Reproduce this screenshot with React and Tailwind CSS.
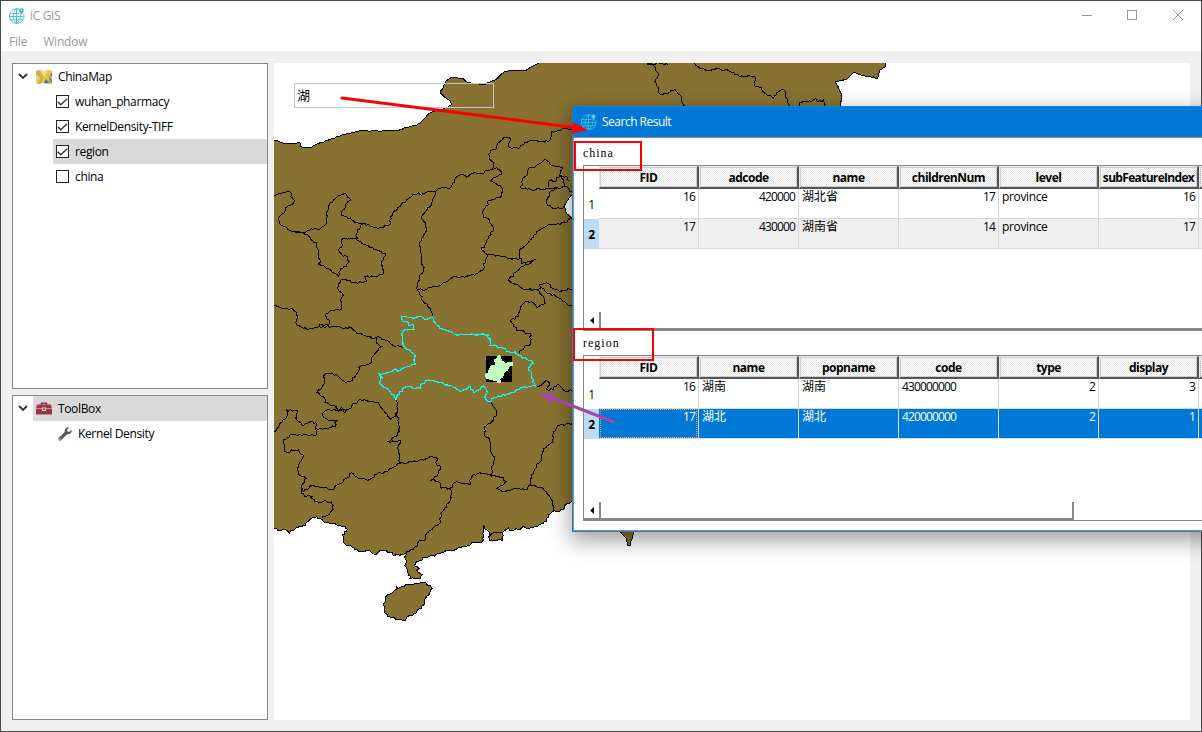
import React from "react";

const UI = "font-['Open_Sans','Noto_Sans_CJK_SC',sans-serif]";

// Every survey sheet stores its points in thirds of a pixel from its origin.
const SHEETS = { A: [270, 60], D: [270, 210], E: [270, 370], F: [270, 490], G: [565, 60] };

const read = (text) => {
  let origin = SHEETS.A;
  const points = [];
  text.trim().split(/\s+/).forEach((token) => {
    if (SHEETS[token]) {
      origin = SHEETS[token];
      return;
    }
    const [x, y] = token.split(",").map(Number);
    points.push([origin[0] + x / 3, origin[1] + y / 3]);
  });
  return points;
};

// Adds a small repeatable wobble between points so that borders look surveyed.
const trace = (text, amount = 2.4, closed = false) => {
  const pts = read(text);
  const out = [pts[0]];
  for (let i = 1; i < pts.length; i++) {
    const [ax, ay] = pts[i - 1];
    const [bx, by] = pts[i];
    const len = Math.hypot(bx - ax, by - ay);
    const n = Math.max(1, Math.min(12, Math.round(len / 2.2)));
    for (let k = 1; k < n; k++) {
      const x = ax + ((bx - ax) * k) / n;
      const y = ay + ((by - ay) * k) / n;
      const s = Math.sin(x * 12.9898 + y * 78.233) * 43758.5453;
      const w = (s - Math.floor(s) - 0.5) * amount;
      out.push([x - ((by - ay) / len) * w, y + ((bx - ax) / len) * w]);
    }
    out.push([bx, by]);
  }
  return "M" + out.map((p) => p[0].toFixed(1) + " " + p[1].toFixed(1)).join("L") + (closed ? "Z" : "");
};

const NORTH =
  "A 12,240 30,246 50,252 90,248 92,260 120,264 135,255 180,238 230,221 270,212 325,213 385,212 410,202 440,196 460,180 475,162 500,150 520,148 545,133 540,122 525,112 510,98 520,82 528,64 545,52 580,56 590,66 605,70 640,74 660,66 675,60 695,42 705,34 730,32 765,32 785,20 806,10";
const EAST = "G 962,8 962,20 945,30 938,54 900,48 865,38 845,58 810,66 820,80 828,100 830,120 825,138";
const SOUTH =
  "F 906,34 900,40 885,46 880,58 860,64 845,66 835,82 820,100 795,108 780,114 755,112 745,118 720,122 715,114 705,122 698,130 698,152 658,152 658,128 650,120 640,104 642,138 640,150 620,158 605,158 600,166 570,174 540,180 525,184 510,192 480,198 465,204 450,212 436,220 434,228 448,236 440,240 448,248 456,254 450,266 435,266 420,266 415,255 412,240 404,228 410,215 404,200 408,190 395,192 375,196 360,186 340,180 325,186 310,192 290,182 270,186 255,178 240,166 222,160 222,145 216,135 232,118 225,108 200,104 180,102 160,94 150,86 140,80 120,88 108,98 105,108 95,110 80,112 75,118 62,122 58,130 48,120 40,118 30,122 20,116 12,116";
const HAINAN =
  "F 345,322 360,312 372,302 380,290 385,296 395,290 420,285 440,282 460,278 480,286 487,296 480,306 470,318 462,335 455,355 440,366 428,378 412,380 400,392 385,388 365,382 345,370 343,350 345,335 345,322";
const TAIWAN = "F 1046,120 1060,135 1070,150 1072,166 1082,166 1084,150 1092,120";
const BAY = "A 915,400 905,405 890,425 882,440 888,455 890,462 D 898,18 905,24 915,28";

const BORDERS = [
  "A 12,408 25,402 40,398 60,396 66,402 62,410 74,422 70,430 55,436 45,452 35,462 28,470 24,480 28,490 50,502 70,515 100,516 130,508 155,502 170,490 168,475 172,455 178,435 190,418 205,408 225,400 232,410 242,420 230,430 218,450 214,465 230,470 250,482 270,490 285,490 300,498 320,504 350,498 362,488 362,470 375,452 390,440 410,420 430,402 445,398 455,406 470,396 490,394 498,400 488,420 480,440 465,455 D 455,20 470,55 460,80 448,100 455,145 460,180 448,205 440,235",
  "A 498,392 512,384 540,384 548,370 560,350 575,342 590,352 615,338 635,342 650,332 668,330 680,322 695,342 670,352 662,362 690,375 698,388 692,412 655,420 655,435 640,450 640,465 D 640,22 658,30 670,55 655,85 645,105 635,120 650,132",
  "A 668,330 672,312 658,295 662,272 680,265 682,250 700,234 718,232 718,262 745,266 760,254 785,240 810,246 840,240 845,215 870,212 890,205 906,208",
  "A 752,385 756,362 772,345 775,325 795,322 825,298 840,312 860,320 878,322 868,345 890,350 895,362",
  "A 752,385 785,390 830,385 865,384 885,378 900,395 908,396",
  "A 835,382 838,362 855,365 860,352 875,348 880,365 885,378",
  "A 862,384 840,395 830,420 832,435 850,445 870,445 882,440",
  "D 70,65 100,68 120,82 140,105 145,125 150,150 145,162 165,170 185,185 205,198 210,175 230,170 238,155 232,140 215,135 205,120 215,110 218,86 240,84 262,84",
  "D 280,42 262,60 260,90 275,100 300,112 345,130 335,155 340,190 325,198 285,200 290,215 250,218 240,210 212,210 205,240 220,255 210,270 215,298 180,302 165,315 178,330 175,345 150,342 150,352",
  "D 12,285 45,295 70,298 82,318 80,345 100,355 125,357 160,350 190,350 215,354 245,354 260,370 285,375 305,385 325,380 345,390 380,408 400,412",
  "D 320,384 320,400 335,410 315,430 298,462 272,468 262,490 E 240,35 220,32 205,18 175,10 160,20 165,40 145,60 140,68 160,80 165,98 200,112 210,122 235,118 245,108 270,88 320,98 328,105 345,128 362,148 375,140 380,125",
  "D 440,238 470,238 500,228 530,215 550,200 590,200 625,188 642,175 650,132 690,138 725,148 750,146",
  "D 440,235 450,255 460,275 480,295 487,318",
  "D 905,25 890,38 850,42 835,45 800,65 785,85 750,118 748,135 755,160 792,150 750,175 718,205 720,215 745,225 760,238 800,240 815,232 810,222 830,218 850,235 870,245 908,235",
  "D 800,240 820,258 825,280 800,292 785,275 765,275 750,300 745,320 722,330 740,360 780,370 782,400 755,420 750,430",
  "D 815,235 840,250 870,265 890,280 908,290",
  "E 380,90 380,130 385,165 390,185 355,215 392,212 382,235 388,265 390,280",
  "E 205,118 180,120 162,125 160,140 175,150 200,152 195,170 170,175 138,175",
  "E 195,112 205,125 215,112 225,128 235,118",
  "E 12,185 30,160 50,140 50,120 80,120 80,150 95,165 120,155 138,158 138,195 120,198 95,196 60,195 40,210 45,245 85,240 100,255 85,290 85,310 108,325 95,350 100,365 130,345 185,360 200,345 220,335 245,308 270,325 300,328 320,312 350,305 365,295 390,280 440,275 480,260 500,262 500,285 512,290 505,310 485,330 505,335 515,355 540,355 560,335 600,345 605,320 630,308 665,318",
  "E 95,355 95,370 110,378 130,380 F 115,15 135,35 185,35 190,60 155,85",
  "E 540,355 545,370 540,390 F 545,20 535,40 512,70 510,100 470,130 465,150 445,155 440,170 410,185 408,192",
  "E 665,95 680,130 665,155 645,170 642,190 660,215 665,250 675,268 665,290 665,318 700,322 708,335 680,355 700,365 740,355 770,360 780,345 785,315 800,290 815,265 820,235 850,215 850,185 870,165 908,160",
  "E 780,345 800,350 820,355 835,375 845,390 F 848,30 850,64",
  "E 800,48 815,45 828,32 840,40 830,58 850,58 862,42 880,60 908,64",
  "G 245,12 265,15 275,35 280,40 270,65 280,95 290,104 330,88 345,105 358,138",
  "G 245,11 262,12 285,10 310,14",
  "G 388,10 405,25 430,30 485,28 510,45 570,50 570,78 590,82 600,100 625,115 635,98 655,88 665,115 678,142",
  "G 703,142 703,128 740,125 745,118 770,125 775,120 778,142",
  "F 658,134 670,128 698,126",
];

const HUBEI =
  "D 487,320 465,328 455,320 430,326 395,320 395,328 412,335 415,345 432,345 432,358 400,362 395,375 402,410 432,432 435,462 410,470 390,482 370,480 355,488 328,492 338,506 E 332,20 328,38 335,45 350,55 365,72 378,88 390,65 410,50 450,55 455,40 475,30 520,40 550,52 570,65 600,50 612,68 640,48 650,60 645,80 655,95 685,78 720,70 740,60 765,50 795,48 785,15 D 785,490 775,475 790,458 770,448 745,435 735,425 720,428 700,415 660,405 655,375 635,372 600,374 555,374 510,355 490,325";

const pairs = (text) => read(text).map((p) => p.join(" ")).join("L");
const LAND =
  trace(NORTH, 0.8) + "L" + pairs(EAST) + "L845 520L572 520L" + trace(SOUTH, 2.6).slice(1) + "Z";

function MapView() {
  return (
    <svg className="block h-[657px] w-[916px]" viewBox="274 63 916 657" shapeRendering="crispEdges">
      <rect x="274" y="63" width="916" height="657" fill="#fff" />
      <path d={LAND} fill="#877231" />
      <path d={trace(HAINAN, 2.6, true)} fill="#877231" stroke="#000" />
      <path d={trace(TAIWAN, 1)} fill="#877231" stroke="#000" />
      <path d={trace(BAY, 1)} fill="#fff" stroke="#000" />
      <g fill="none" stroke="#000" strokeWidth="1">
        <path d={trace(NORTH, 0.8)} />
        <path d={trace(EAST, 1)} />
        <path d={trace(SOUTH, 2.6)} />
        {BORDERS.map((b, i) => (
          <path key={i} d={trace(b, 2.4)} />
        ))}
      </g>
      <path d={trace(HUBEI, 2.4, true)} fill="none" stroke="#00ffff" strokeWidth="1.2" />
      <rect x="486" y="356" width="26" height="26" fill="#000" />
      <path
        d="M498 355h2v1h1v3h1v2h2v1h1v1h2v-1h6v4h-3v1h-1v2h-1v2h-2v1h-1v1h-1v3h-1v2h-2v1h-1v1h1v3h-4v-2h-4v-1h-4v-1h-3v-2h-1v-3h1v-1h2v-3h1v-2h1v-2h1v-1h4v-3h-1v-3h2z"
        fill="#c0ffc0"
      />
    </svg>
  );
}

function Globe() {
  return (
    <svg className="size-4 shrink-0" viewBox="0 0 16 16" fill="none" stroke="#3fc0d6" strokeWidth=".9">
      <path d="M10.5 1.2A7.4 7.4 0 1 0 14.8 6" />
      <path d="M9.8 1.1H7.5v14.4M7.5 1C3 4.500 3 12 7.500 15.500C12 12 12 9 11.300 6.500M1 5.500h9.500M.3 8.500h14.500M1 11.800h13" />
      <path d="M12.500 .3c-1.400 0-2.300 1-2.300 2.200c0 1.500 1.600 3 2.300 4.500c.7-1.500 2.300-3 2.300-4.500c0-1.200-.9-2.200-2.300-2.200z" fill="#3fb4d0" stroke="none" />
      <circle cx="12.500" cy="2.600" r=".8" fill="#d6f4f8" stroke="none" />
    </svg>
  );
}

function MapIcon() {
  return (
    <svg className="ml-[8px] mr-[6px] h-[14px] w-4" viewBox="0 0 16 14">
      <path d="M0 1 4 0l4 1.200L12 0l4 1v12l-4 1-4-1.200L4 14l-4-1z" fill="#e2c44e" />
      <path d="M0 1l4-1 4 7-4 7-4-1z" fill="#ceb050" />
      <path d="M4 0l4 1.200L12 0 8 7z" fill="#f0dc8a" />
      <path d="M12 0l4 1v12l-4 1-2-6z" fill="#e8c62e" />
      <path d="M0 4l4 4-3 6H0z" fill="#e7d591" />
      <path d="M16 3v4l-2-2zM10 9l3 4-4 .4-1-1z" fill="#5b6c9c" />
      <path d="M13 6l3 3v4l-3-.5z" fill="#8b8fa0" />
    </svg>
  );
}

function ToolboxIcon() {
  return (
    <svg className="ml-[3px] mr-[6px] h-[13px] w-4" viewBox="0 0 16 13">
      <path d="M4.700 3V.6h6.600V3H9.800V2H6.200v1z" fill="#9a3544" />
      <path d="M1 2.500h14l1 4v6H0v-6z" fill="#9a3544" />
      <path d="M0 6.200h6v.8H0zM10 6.200h6v.8h-6z" fill="#d9a9b0" />
      <path d="M6 5.500h4v3.500H6z" fill="#eadde0" />
      <path d="M7 6.300h2v1.700H7z" fill="#9a3544" />
    </svg>
  );
}

function Wrench() {
  return (
    <svg className="ml-[45px] mr-[6px] size-[14px]" viewBox="0 0 14 14">
      <path d="M11.200 .5 9 2.700l.4 1.900 1.900.4L13.600 2.800C14.200 5.500 12 7.700 9 7.200L3 13.300C1.700 14.400-.4 12.500.7 11L6.800 5C6.200 2 8.500-.2 11.200.5z" fill="#555" />
      <circle cx="2" cy="12" r=".7" fill="#fff" />
    </svg>
  );
}

function Chevron() {
  return (
    <svg className="h-[7px] w-[10px]" viewBox="0 0 10 7" fill="none" stroke="#333" strokeWidth="1.800">
      <path d="M1 1l4 4 4-4" />
    </svg>
  );
}

function Check({ on }) {
  return (
    <span className="mr-[6px] flex size-[13px] items-center justify-center border border-[#222] bg-white">
      {on && (
        <svg className="h-[8px] w-[11px]" viewBox="0 0 11 8" fill="none" stroke="#333" strokeWidth="1.300">
          <path d="M.8 3.800 3.800 6.800 10.200 .7" />
        </svg>
      )}
    </span>
  );
}

function Layer({ on, selected, children }) {
  return (
    <div className={`ml-10 flex h-[25px] items-center pl-[3px] ${selected ? "bg-[#d9d9d9]" : ""}`}>
      <Check on={on} />
      {children}
    </div>
  );
}

const cellTone = (text) => {
  if (/^\d/.test(text)) return "tracking-[-0.85px]";
  if (/^[a-z]/i.test(text)) return "tracking-[-0.36px]";
  return "tracking-normal";
};

function Grid({ head, rows, aligns, active, plainBottom }) {
  return (
    <div className="flex h-full flex-col border-b border-l border-t border-[#828790]">
      <div className="flex h-[23px] w-[640px] shrink-0 pl-[15px]">
        {[...head, ""].map((h, i) => (
          <div
            key={i}
            className="flex h-[23px] w-[100px] shrink-0 border-b-2 border-r-2 border-b-[#555] border-r-[#555] border-l border-t border-l-[#e8e8e8] border-t-[#e8e8e8]"
          >
            <div className="flex flex-1 items-center justify-center overflow-hidden whitespace-nowrap border border-[#cfcfcf] bg-[repeating-conic-gradient(#e4e4e4_0_25%,#ffffff_0_50%)] bg-[length:2px_2px] pt-px text-[12px] font-bold">
              <span className={h.length > 12 ? "tracking-[-0.68px]" : "tracking-[-0.5px]"}>{h}</span>
            </div>
          </div>
        ))}
      </div>
      {rows.map((row, r) => {
        const blue = active && r === 1;
        return (
          <div key={r} className="flex h-[30px] w-[640px] shrink-0">
            <div
              className={`flex w-[15px] shrink-0 items-center justify-center pt-px ${
                r === 1 ? "bg-[#bcdcf4] font-bold" : ""
              }`}
            >
              {r + 1}
            </div>
            {[...row, ""].map((c, i) => (
              <div
                key={i}
                className={`relative h-[30px] w-[100px] shrink-0 border-b border-r border-[#d8d8d8] px-[3px] leading-[15px] ${
                  aligns[i] === "r" ? "text-right" : "text-left"
                } ${blue ? "bg-[#0078d7] text-white" : r === 1 ? "bg-[#efefef]" : ""} ${cellTone(c)}`}
              >
                {c}
                {blue && i === 0 && (
                  <span className="absolute bottom-0 left-px right-px top-0 border border-dotted border-[#ff9a45]" />
                )}
              </div>
            ))}
          </div>
        );
      })}
      <div className="flex-1" />
      <div className="flex h-[18px] shrink-0">
        <div className="flex w-[17px] items-center justify-center border-b-2 border-r-2 border-[#888]">
          <svg className="h-[7px] w-1" viewBox="0 0 4 7">
            <path d="M4 0v7L0 3.500z" />
          </svg>
        </div>
        <div className={plainBottom ? "w-[473px] border-b-2 border-r-2 border-[#888]" : "flex-1 border-b-2 border-[#888]"} />
      </div>
    </div>
  );
}

function SearchResult() {
  return (
    <div className="absolute left-[572px] top-[106px] flex h-[426px] w-[700px] flex-col border border-[#1b80d2] bg-white shadow-[0_7px_20px_2px_rgba(0,0,0,0.36)]">
      <div className="flex h-[30px] shrink-0 items-center gap-[5px] bg-[#0078d7] pl-2 text-white">
        <Globe />
        <span className="tracking-[-0.5px]">Search Result</span>
      </div>
      <div className="flex flex-1 flex-col border-b border-l border-t border-[#8a8f95] pl-[9px]">
        <div className="h-[27px] pt-[7px] font-['Liberation_Serif',serif] text-[12px] leading-[16px] tracking-[0.95px]">china</div>
        <div className="h-[166px]">
          <Grid
            head={["FID", "adcode", "name", "childrenNum", "level", "subFeatureIndex"]}
            rows={[
              ["16", "420000", "湖北省", "17", "province", "16"],
              ["17", "430000", "湖南省", "14", "province", "17"],
            ]}
            aligns={["r", "r", "l", "r", "l", "r"]}
          />
        </div>
        <div className="h-[24px] pt-[4px] font-['Liberation_Serif',serif] text-[12px] leading-[16px] tracking-[1px]">region</div>
        <div className="h-[166px]">
          <Grid
            active
            plainBottom
            head={["FID", "name", "popname", "code", "type", "display"]}
            rows={[
              ["16", "湖南", "湖南", "430000000", "2", "3"],
              ["17", "湖北", "湖北", "420000000", "2", "1"],
            ]}
            aligns={["r", "l", "l", "l", "r", "r"]}
          />
        </div>
      </div>
    </div>
  );
}

function Annotations() {
  return (
    <svg className="pointer-events-none absolute inset-0 h-[732px] w-[1202px]" viewBox="0 0 1202 732">
      <path d="M342 98 574 127.500" stroke="#f00" strokeWidth="3" strokeLinecap="round" />
      <path d="M588 130 571 134l2.500-6L572 122z" fill="#f00" />
      <path d="M614 422 552 398" stroke="#a349a4" strokeWidth="3" strokeLinecap="round" />
      <path d="M539 393.500 556 394l-3.500 4-1 6.500z" fill="#a349a4" />
      <g fill="none" stroke="#f00" strokeWidth="2">
        <rect x="575" y="142" width="66" height="28" />
        <rect x="574" y="329" width="79" height="31" />
      </g>
    </svg>
  );
}

function MainWindow() {
  return (
    <div className="flex h-[732px] w-[1202px] flex-col overflow-hidden border border-[#4a4a4a] bg-[#f0f0f0]">
      <header className="flex h-[30px] shrink-0 items-center bg-white pl-2 text-[#999]">
        <Globe />
        <span className="ml-[5px] flex-1">iC GIS</span>
        <svg className="h-[30px] w-[120px]" viewBox="1081 1 120 30" fill="none" stroke="#999" shapeRendering="crispEdges">
          <path d="M1082 15.500h10M1127.500 10.500h9v9h-9z" />
          <path d="M1173 10l10 10M1183 10l-10 10" shapeRendering="auto" />
        </svg>
      </header>
      <nav className="flex h-5 shrink-0 items-center gap-[16px] bg-white pl-2 pt-[2px] tracking-[-0.2px] text-[#999]">
        <span>File</span>
        <span>Window</span>
      </nav>
      <main className="flex gap-[6px] pl-[11px] pt-3">
        <aside className="flex w-[256px] shrink-0 flex-col gap-[6px]">
          <section className="h-[326px] border border-[#828790] bg-white">
            <div className="flex h-[25px] items-center pl-[5px]">
              <Chevron />
              <MapIcon />
              ChinaMap
            </div>
            <Layer on>wuhan_pharmacy</Layer>
            <Layer on>KernelDensity-TIFF</Layer>
            <Layer on selected>region</Layer>
            <Layer>china</Layer>
          </section>
          <section className="h-[325px] border border-[#828790] bg-white">
            <div className="flex h-[25px] items-center pl-[5px]">
              <Chevron />
              <div className="ml-[5px] flex h-[25px] flex-1 items-center bg-[#d9d9d9]">
                <ToolboxIcon />
                ToolBox
              </div>
            </div>
            <div className="flex h-[25px] items-center">
              <Wrench />
              Kernel Density
            </div>
          </section>
        </aside>
        <div className="relative">
          <MapView />
          <div className="absolute left-[20px] top-[20px] flex h-[25px] w-[200px] items-center border border-[#c6c6c6] pl-[2px] text-[13px]">湖</div>
        </div>
      </main>
    </div>
  );
}

export default function App() {
  return (
    <div className={`relative h-[732px] w-[1202px] overflow-hidden text-[12px] tracking-[-0.36px] text-black ${UI}`}>
      <MainWindow />
      <SearchResult />
      <Annotations />
    </div>
  );
}
